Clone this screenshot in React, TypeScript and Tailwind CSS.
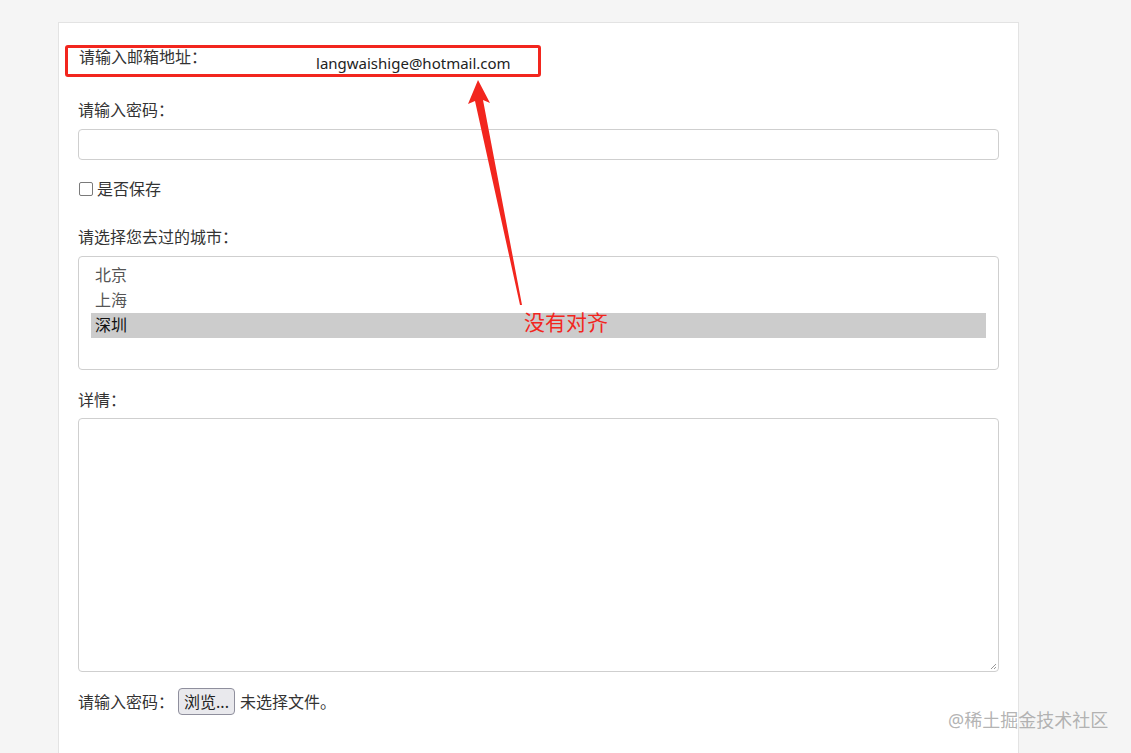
import React from 'react';

const FONT = { fontFamily: '"Noto Sans", "Noto Sans CJK SC", sans-serif' };

const CITIES = ['北京', '上海', '深圳'];

export default function App() {
  return (
    <div className="relative h-[753px] w-[1131px] overflow-hidden bg-[#f5f5f5] text-[16px] text-[#333]" style={FONT}>
      {/* form card */}
      <div className="ml-[58px] mt-[22px] h-[760px] w-[961px] border border-[#e3e3e3] bg-white px-[19px] pt-[22px]">
        {/* email row (red annotation box) */}
        <div className="-ml-[13px] flex h-[32px] w-[476px] items-start rounded-[3px] border-[3px] border-[#f2261e] pl-[11px]">
          <span className="mt-[-1px] leading-[20px]">请输入邮箱地址：</span>
          <span className="ml-[109px] mt-[5px] text-[15px] leading-[20px] text-[#222]">langwaishige@hotmail.com</span>
        </div>

        {/* password */}
        <div className="mt-[23px] leading-[20px]">请输入密码：</div>
        <div className="mt-[9px] h-[31px] rounded-[4px] border border-[#cfcfcf]" />

        {/* remember */}
        <label className="mt-[19px] flex h-[20px] items-center gap-[4px]">
          <span className="ml-[1px] h-[14px] w-[14px] rounded-[2px] border border-[#7a7a7a] bg-white" />
          <span className="leading-[20px]">是否保存</span>
        </label>

        {/* cities */}
        <div className="mt-[28px] leading-[20px]">请选择您去过的城市：</div>
        <div className="mt-[9px] h-[114px] rounded-[4px] border border-[#cfcfcf] px-[12px] pt-[6px]">
          {CITIES.map((c, i) => (
            <div
              key={c}
              className={`h-[25px] pl-[4px] leading-[25px] ${i === 2 ? 'bg-[#cccccc] pl-[2px] text-[#111]' : 'text-[#555]'}`}
            >
              {c}
            </div>
          ))}
        </div>

        {/* details */}
        <div className="mt-[20px] leading-[20px]">详情：</div>
        <div className="relative mt-[8px] h-[254px] rounded-[4px] border border-[#cfcfcf]">
          <svg className="absolute bottom-[1px] right-[1px]" width="7" height="7" viewBox="0 0 7 7">
            <path d="M6 1L1 6M6 4L4 6" stroke="#999" strokeWidth="1" />
          </svg>
        </div>

        {/* file */}
        <div className="mt-[16px] flex h-[27px] items-center">
          <span>请输入密码：</span>
          <button className="ml-[4px] h-[27px] w-[57px] rounded-[4px] border border-[#8f8f9d] bg-[#e9e9ed] text-[#222]">浏览...</button>
          <span className="ml-[5px]">未选择文件。</span>
        </div>
      </div>

      {/* annotation arrow */}
      <svg className="pointer-events-none absolute left-0 top-0" width="1131" height="753">
        <polygon points="478,80 490,103 483,100 522,305 520,305 475,101 468,104" fill="#f2261e" />
      </svg>
      <span className="absolute left-[524px] top-[310px] text-[21px] leading-[24px] text-[#f2261e]">没有对齐</span>

      {/* watermark */}
      <span className="absolute left-[948px] top-[708px] text-[18px] leading-[24px] text-[#a0a0a0]/80">@稀土掘金技术社区</span>
    </div>
  );
}
